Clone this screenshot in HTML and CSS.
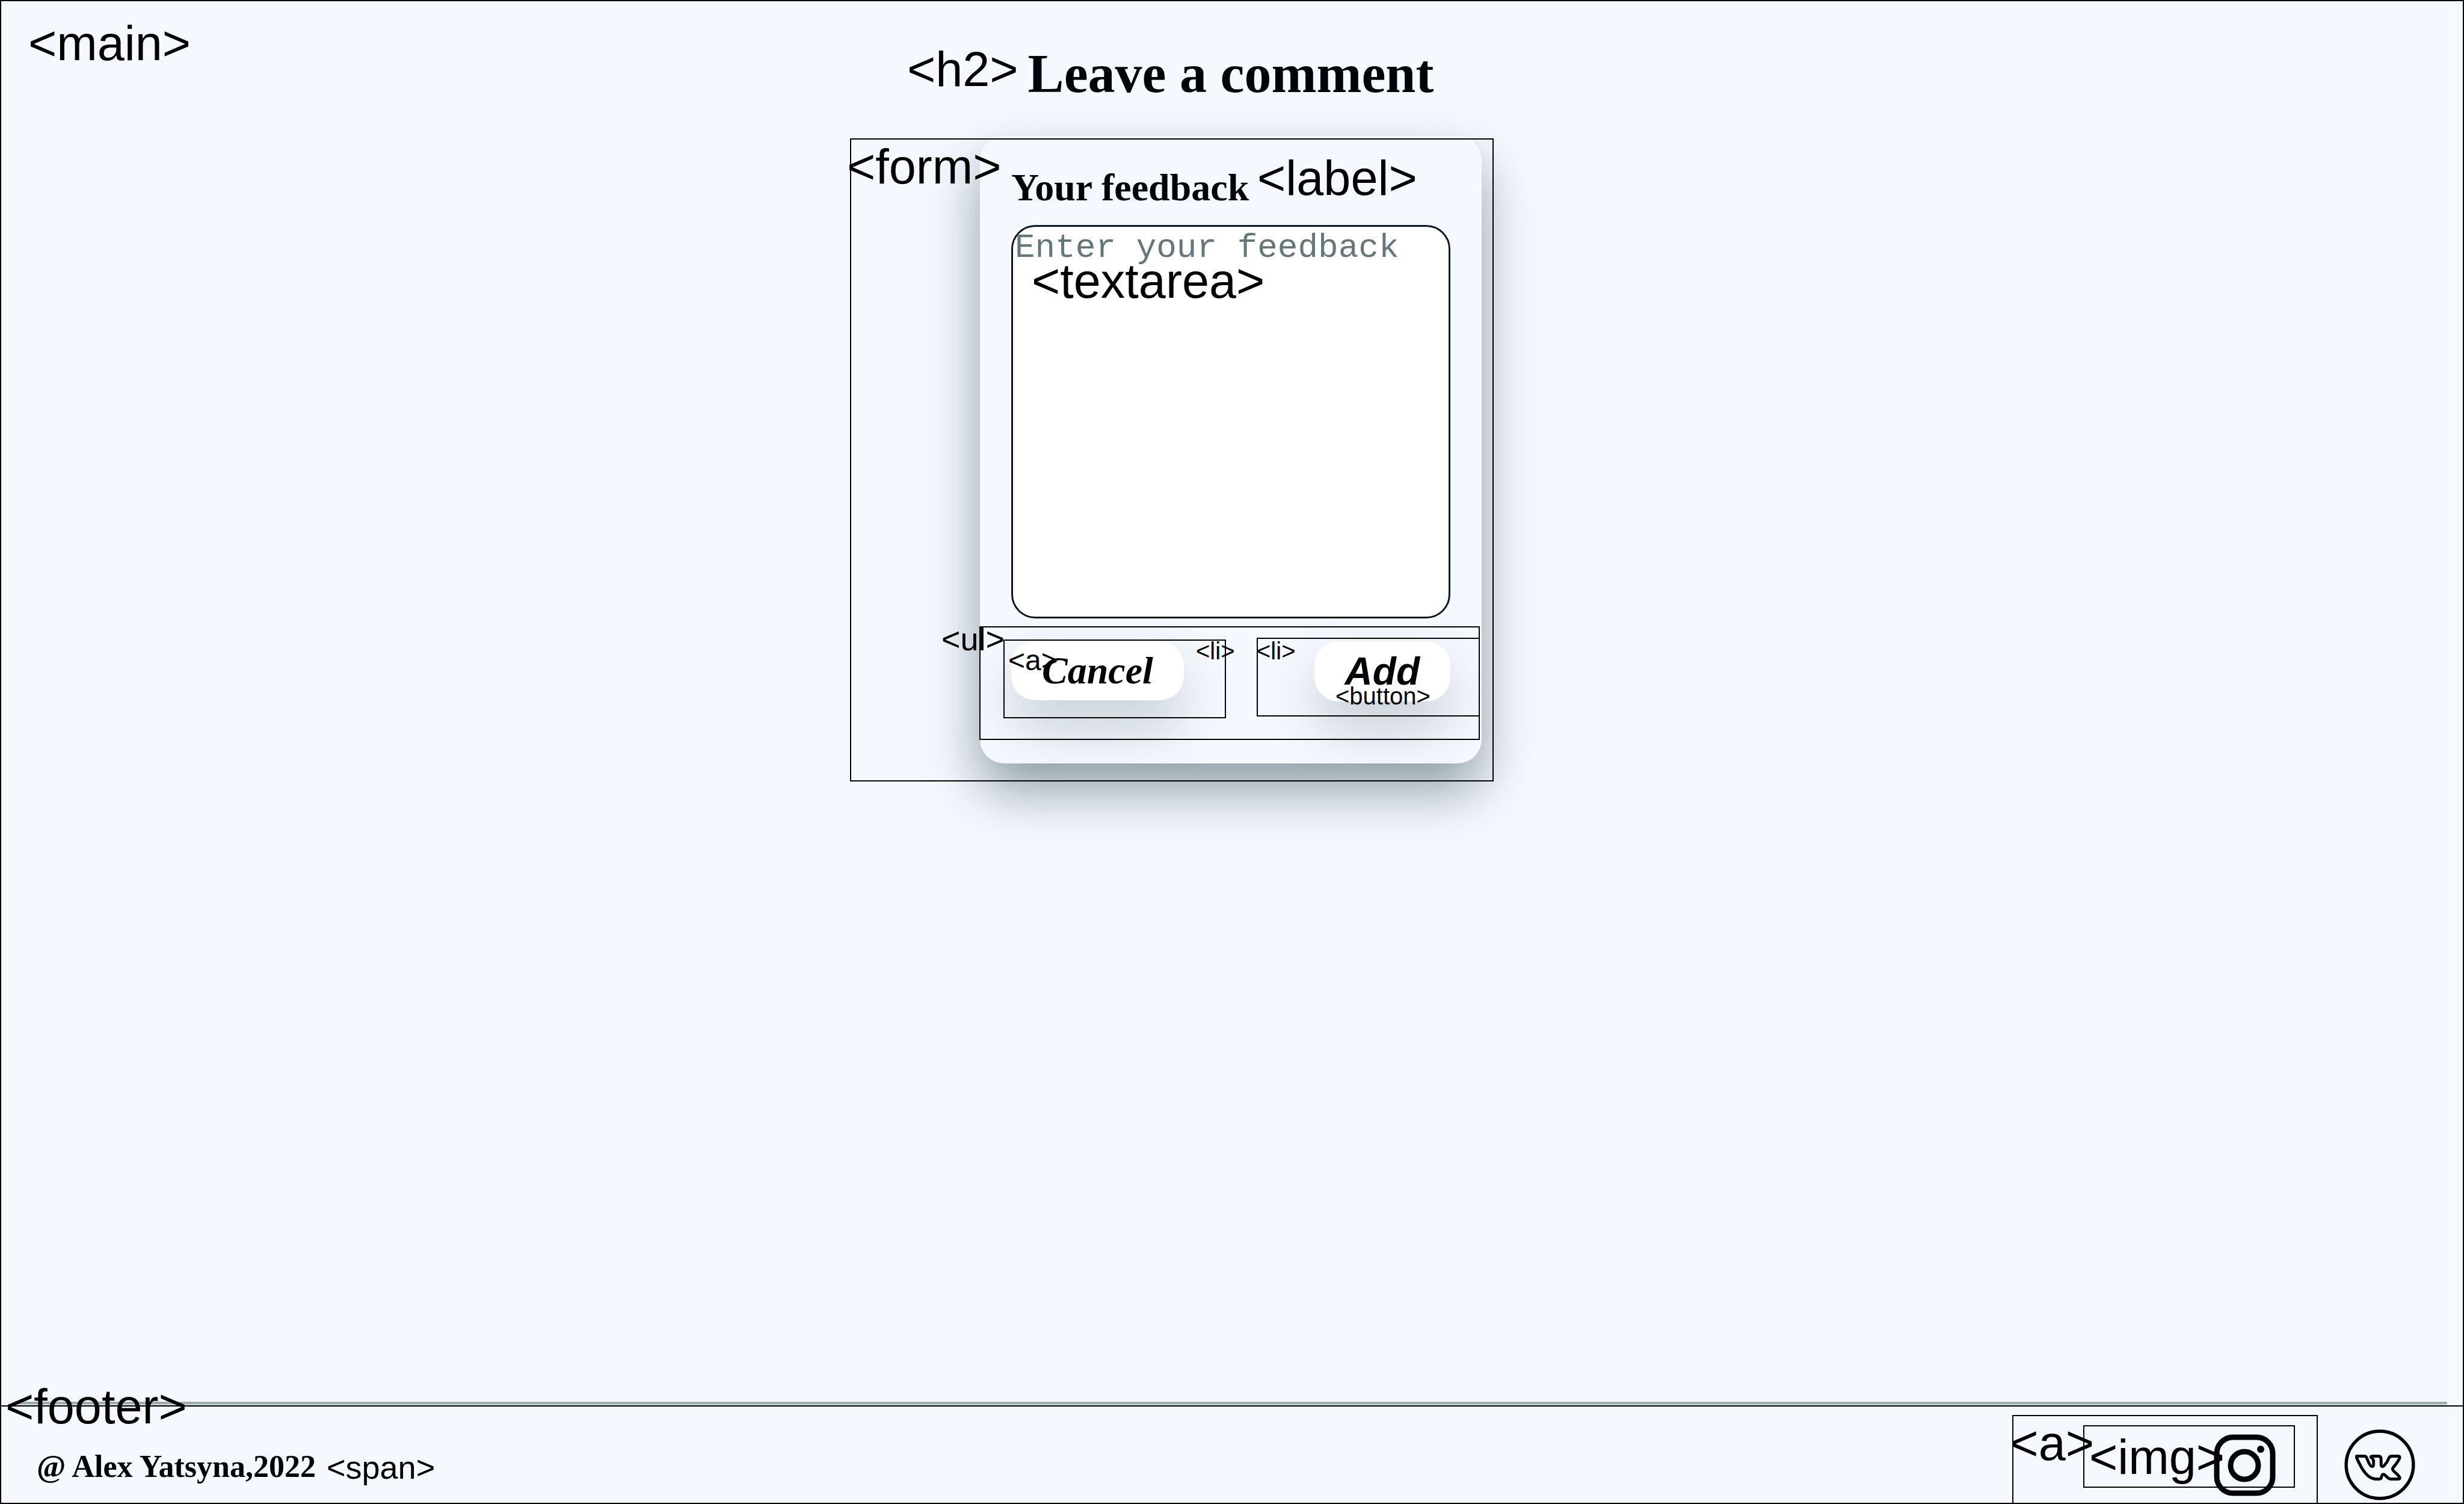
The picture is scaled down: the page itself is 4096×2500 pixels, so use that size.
FILE: index.html
```html
<!DOCTYPE html>
<html lang="en">
<head>
  <meta charset="utf-8">
  <meta name="viewport" content="width=device-width, initial-scale=1">
  <title>Leave a comment</title>
  <link rel="stylesheet" href="styles.css">
</head>
<body>
  <main class="main">
    <span class="tag tag-main">&lt;main&gt;</span>
    <h2 class="title"><span class="tag tag-h2">&lt;h2&gt;</span>Leave a comment</h2>

    <form class="card">
      <label class="label" for="feedback">Your feedback</label>
      <textarea class="feedback" id="feedback" placeholder="Enter your feedback"></textarea>
      <ul class="actions">
        <li><a class="action cancel" href="#">Cancel</a></li>
        <li><button class="action add" type="submit">Add</button></li>
      </ul>

      <div class="outline outline-form"></div>
      <div class="outline outline-ul"></div>
      <div class="outline outline-li-first"></div>
      <div class="outline outline-li-last"></div>
      <span class="tag tag-form">&lt;form&gt;</span>
      <span class="tag tag-label">&lt;label&gt;</span>
      <span class="tag tag-textarea">&lt;textarea&gt;</span>
      <span class="tag tag-medium tag-ul">&lt;ul&gt;</span>
      <span class="tag tag-link tag-a">&lt;a&gt;</span>
      <span class="tag tag-small tag-li-first">&lt;li&gt;</span>
      <span class="tag tag-small tag-li-last">&lt;li&gt;</span>
      <span class="tag tag-small tag-button">&lt;button&gt;</span>
    </form>

    <hr class="rule">
  </main>

  <footer class="footer">
    <span class="author">@ Alex Yatsyna,2022</span>
    <div class="social">
      <a href="#" aria-label="Instagram">
        <svg class="icon-instagram" viewBox="0 0 103 103" fill="none" stroke="#000408" stroke-width="9">
          <rect x="5" y="5" width="93" height="93" rx="27"/>
          <circle cx="51" cy="52" r="23"/>
          <circle cx="78" cy="25" r="6" fill="#000408" stroke="none"/>
        </svg>
      </a>
      <a href="#" aria-label="VK">
        <svg class="icon-vk" viewBox="78 73 432 435" fill="none" stroke="#000408" stroke-linejoin="round">
          <circle cx="294" cy="290" r="206" stroke-width="20"/>
          <path stroke-width="18" d="M152 237H200C212 237 213 245 217 255C225 276 236 300 246 300C256 301 256 290 256 270C256 256 250 250 240 245C238 238 246 237 256 237H285C298 237 302 244 302 255V290C302 302 313 304 322 294C335 280 345 262 350 248C354 239 360 237 368 237H406C418 237 418 245 414 253C404 275 388 292 374 310C370 317 372 320 378 327C392 342 408 352 415 366C420 374 414 377 404 377H362C346 377 336 360 322 350C312 346 306 352 305 362C304 374 300 377 290 377H268C215 375 180 310 152 246Z"/>
        </svg>
      </a>
    </div>

    <div class="outline outline-footer-a"></div>
    <div class="outline outline-img"></div>
    <span class="tag tag-footer">&lt;footer&gt;</span>
    <span class="tag tag-medium tag-span">&lt;span&gt;</span>
    <span class="tag tag-footer-a">&lt;a&gt;</span>
    <span class="tag tag-img">&lt;img&gt;</span>
  </footer>
</body>
</html>
```
FILE: styles.css
```css
* {
  box-sizing: border-box;
}

body {
  display: flex;
  flex-direction: column;
  min-height: 100vh;
  margin: 0;
  background: #f5f8ff;
  color: #000408;
  font-family: "Liberation Serif", "Times New Roman", serif;
}

/* Page */

.main {
  position: relative;
  display: flex;
  flex: 1;
  flex-direction: column;
  align-items: center;
  padding: 76px 4px 0 0;
  border: 2px solid #000;
  border-bottom: 0;
}

.title {
  position: relative;
  margin: 0 0 58px;
  font-size: 90px;
  line-height: 90px;
}

.card {
  position: relative;
  display: flex;
  flex-direction: column;
  width: 834px;
  padding: 54px 52px 103px;
  border-radius: 40px;
  background: #f5f8ff;
  box-shadow: 0 45px 90px rgba(0, 38, 42, 0.42);
}

.label {
  margin-bottom: 30px;
  font-size: 64px;
  font-weight: bold;
  line-height: 64px;
}

.feedback {
  display: block;
  width: 100%;
  height: 654px;
  padding: 3px;
  border: 3px solid #0c181c;
  border-radius: 40px;
  background: #fff;
  color: #000408;
  font-family: "Liberation Mono", "Courier New", monospace;
  font-size: 56px;
  resize: none;
}

.feedback::placeholder {
  color: #64777a;
  opacity: 1;
}

.actions {
  display: flex;
  justify-content: space-between;
  align-items: flex-start;
  margin: 38px 0 0;
  padding: 0;
  list-style: none;
}

.action {
  display: block;
  padding: 17px 51px;
  border: 0;
  border-radius: 40px;
  background: #fff;
  box-shadow: 0 45px 90px rgba(0, 38, 42, 0.2);
  color: #000408;
  font-size: 64px;
  font-style: italic;
  font-weight: bold;
  line-height: 64px;
  text-decoration: none;
}

.add {
  padding-block: 18px;
  font-family: "Liberation Sans", Arial, sans-serif;
}

.rule {
  width: calc(100% - 44px);
  height: 6px;
  margin: auto 0 0;
  border: 0;
  border-top: 4px solid #9cacae;
  background: #cfdadc;
}

/* Footer */

.footer {
  position: relative;
  display: flex;
  justify-content: space-between;
  align-items: center;
  padding: 38px 79px 4px 59px;
  border: 2px solid #000;
}

.author {
  padding-top: 5px;
  font-size: 52px;
  font-weight: bold;
  line-height: 52px;
}

.social {
  display: flex;
  align-items: center;
  gap: 114px;
}

.social svg {
  display: block;
}

.icon-instagram {
  width: 103px;
  height: 103px;
}

.icon-vk {
  width: 118px;
  height: 118px;
}

/* Element markers laid over the page */

.outline {
  position: absolute;
  border: 2px solid #000;
  pointer-events: none;
}

.tag {
  position: absolute;
  color: #000;
  font-family: "Liberation Sans", Arial, sans-serif;
  font-size: 81px;
  font-weight: normal;
  line-height: 1;
  white-space: nowrap;
  pointer-events: none;
}

.tag-medium {
  font-size: 54px;
}

.tag-link {
  font-size: 48px;
}

.tag-small {
  font-size: 40px;
}

.tag-main {
  top: 30px;
  left: 45px;
}

.tag-h2 {
  top: -3px;
  right: calc(100% + 16px);
}

.outline-form {
  top: 4px;
  right: -20px;
  bottom: -30px;
  left: -216px;
}

.outline-ul {
  top: 815px;
  right: 3px;
  bottom: 39px;
  left: -1px;
}

.outline-li-first {
  top: 837px;
  left: 39px;
  width: 370px;
  height: 131px;
}

.outline-li-last {
  top: 834px;
  right: 3px;
  width: 371px;
  height: 131px;
}

.tag-form {
  top: 11px;
  left: -221px;
}

.tag-label {
  top: 30px;
  left: 461px;
}

.tag-textarea {
  top: 201px;
  left: 86px;
}

.tag-ul {
  top: 809px;
  left: -64px;
}

.tag-a {
  top: 848px;
  left: 47px;
}

.tag-li-first {
  top: 836px;
  left: 359px;
}

.tag-li-last {
  top: 836px;
  left: 460px;
}

.tag-button {
  top: 911px;
  left: 591px;
}

.outline-footer-a {
  top: 14px;
  right: 241px;
  bottom: -2px;
  width: 508px;
}

.outline-img {
  top: 31px;
  right: 279px;
  width: 352px;
  height: 104px;
}

.tag-footer {
  top: -40px;
  left: 7px;
}

.tag-span {
  top: 74px;
  left: 541px;
}

.tag-footer-a {
  top: 21px;
  right: 613px;
}

.tag-img {
  top: 44px;
  right: 396px;
}
```
